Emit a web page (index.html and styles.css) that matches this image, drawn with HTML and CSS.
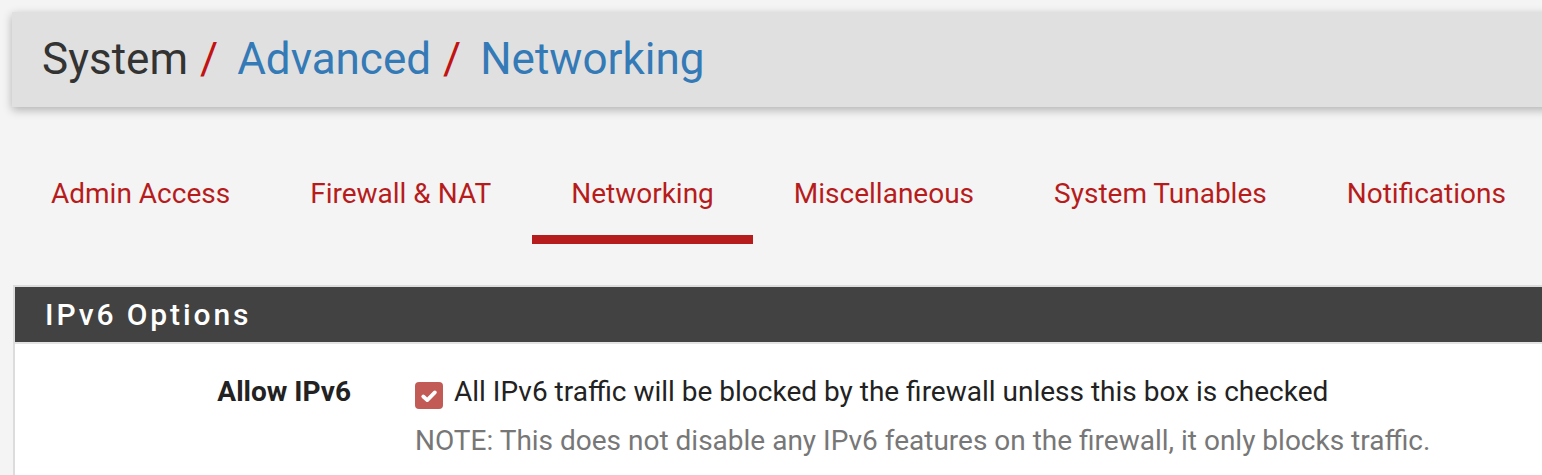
FILE: index.html
```html
<!DOCTYPE html>
<html lang="en">
<head>
<meta charset="utf-8">
<title>System / Advanced / Networking</title>
<link rel="stylesheet" href="styles.css">
</head>
<body>
<div class="page">
  <header class="page-header">
    <h1 class="crumbs">
      <span class="crumb">System</span><span class="sep">/</span>
      <a class="crumb link" href="#">Advanced</a><span class="sep">/</span>
      <a class="crumb link" href="#">Networking</a>
    </h1>
  </header>

  <nav class="tabs">
    <a class="tab" href="#">Admin Access</a>
    <a class="tab" href="#">Firewall &amp; NAT</a>
    <a class="tab active" href="#">Networking</a>
    <a class="tab" href="#">Miscellaneous</a>
    <a class="tab" href="#">System Tunables</a>
    <a class="tab" href="#">Notifications</a>
  </nav>

  <section class="panel">
    <h2 class="panel-title">IPv6 Options</h2>
    <div class="panel-body">
      <div class="form-row">
        <div class="label">Allow IPv6</div>
        <div class="field">
          <label class="check-line">
            <span class="checkbox"><svg viewBox="0 0 16 16" width="20" height="20"><path d="M3.4 8.4 L6.6 11.3 L12.7 5.1" fill="none" stroke="#fff" stroke-width="3" stroke-linecap="round" stroke-linejoin="round"/></svg></span>
            <span class="check-text">All IPv6 traffic will be blocked by the firewall unless this box is checked</span>
          </label>
          <p class="help">NOTE: This does not disable any IPv6 features on the firewall, it only blocks traffic.</p>
        </div>
      </div>
    </div>
  </section>
</div>
</body>
</html>
```

FILE: styles.css
```css
html, body {
  margin: 0;
  padding: 0;
  background: #f4f4f4;
  overflow: hidden;
}

body {
  font-family: Roboto, "Liberation Sans", sans-serif;
  color: #222;
}

.page {
  width: 1620px;
  padding: 12px 0 0 12px;
}

.page-header {
  height: 95px;
  background: #e0e0e0;
  box-shadow: 0 3px 9px rgba(0, 0, 0, 0.28);
  display: flex;
  align-items: center;
  padding-left: 30px;
}

.crumbs {
  margin: 0;
  font-size: 44px;
  font-weight: 400;
  line-height: 1;
  display: flex;
  align-items: baseline;
  padding-bottom: 2px;
}

.crumb {
  color: #333;
  text-decoration: none;
}

.crumb.link {
  color: #337ab7;
}

.sep {
  color: #c21212;
  margin-left: 12px;
  margin-right: 19px;
}

.tabs {
  display: flex;
  margin-top: 47px;
}

.tab {
  display: block;
  font-size: 28px;
  line-height: 40px;
  color: #b71c1c;
  text-decoration: none;
  padding: 20px 39px 21px;
  border-bottom: 9px solid transparent;
  margin-right: 2px;
}

.tab.active {
  border-bottom-color: #b71c1c;
}

.panel {
  margin-top: 41px;
  margin-left: 1px;
  border: 2px solid #dcdcdc;
  background: #fff;
}

.panel-title {
  margin: 0;
  height: 55px;
  background: #424242;
  color: #fff;
  font-size: 30px;
  font-weight: 500;
  letter-spacing: 2.9px;
  line-height: 55px;
  padding-left: 30px;
  border-bottom: 2px solid #e3e3e3;
}

.panel-body {
  padding: 28px 0 20px;
}

.form-row {
  display: grid;
  grid-template-columns: 365px 1fr;
}

.label {
  text-align: right;
  font-size: 28px;
  line-height: 40px;
  font-weight: 700;
  color: #222;
  padding-right: 29px;
}

.field {
  padding-left: 35px;
}

.check-line {
  display: flex;
  align-items: center;
  gap: 11px;
  font-size: 28px;
  line-height: 40px;
  color: #222;
}

.checkbox {
  width: 28px;
  height: 27px;
  border-radius: 4px;
  background: #c25a56;
  display: flex;
  align-items: center;
  justify-content: center;
  margin-top: 7px;
}

.help {
  margin: 9px 0 0;
  font-size: 28px;
  line-height: 40px;
  color: #777;
}
```
